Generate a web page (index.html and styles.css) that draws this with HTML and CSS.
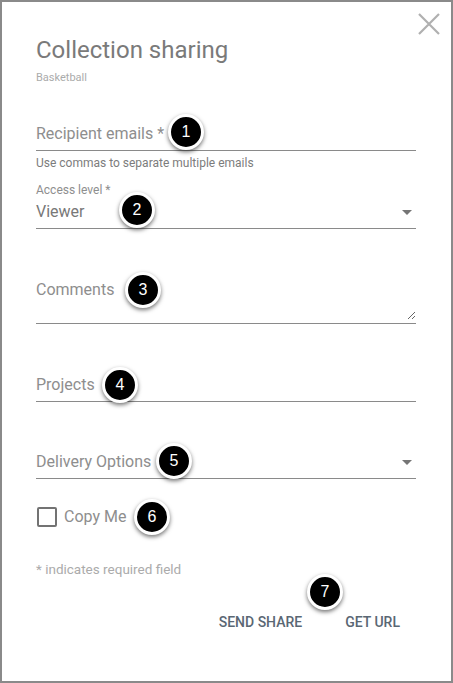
FILE: index.html
```html
<!DOCTYPE html>
<html lang="en">
<head>
    <meta charset="UTF-8">
    <meta name="viewport" content="width=device-width, initial-scale=1.0">
    <title>Collection sharing</title>
    <link rel="stylesheet" href="styles.css">
</head>
<body>
    <div class="dialog">
        <button class="close" aria-label="Close">
            <svg width="22" height="22" viewBox="0 0 22 22">
                <path d="M1 1 L21 21 M21 1 L1 21" stroke="#b0b0b0" stroke-width="2.2" fill="none"/>
            </svg>
        </button>

        <h1 class="title">Collection sharing</h1>
        <p class="subtitle">Basketball</p>

        <div class="field field-emails">
            <span class="placeholder">Recipient emails *</span>
        </div>
        <p class="helper">Use commas to separate multiple emails</p>

        <div class="field field-select field-access">
            <span class="small-label">Access level *</span>
            <div class="select-row">
                <span class="value">Viewer</span>
                <span class="arrow"></span>
            </div>
        </div>

        <div class="field field-comments">
            <span class="placeholder">Comments</span>
            <svg class="grip" width="9" height="9" viewBox="0 0 9 9">
                <path d="M1 8 L8 1 M5 8 L8 5" stroke="#666" stroke-width="1" fill="none"/>
            </svg>
        </div>

        <div class="field field-projects">
            <span class="placeholder">Projects</span>
        </div>

        <div class="field field-select field-delivery">
            <div class="select-row">
                <span class="placeholder">Delivery Options</span>
                <span class="arrow"></span>
            </div>
        </div>

        <label class="checkbox-row">
            <span class="checkbox"></span>
            <span class="checkbox-text">Copy Me</span>
        </label>

        <p class="required-note">* indicates required field</p>

        <div class="actions">
            <button class="btn">SEND SHARE</button>
            <button class="btn">GET URL</button>
        </div>

        <!-- numbered callouts -->
        <span class="badge badge-1">1</span>
        <span class="badge badge-2">2</span>
        <span class="badge badge-3">3</span>
        <span class="badge badge-4">4</span>
        <span class="badge badge-5">5</span>
        <span class="badge badge-6">6</span>
        <span class="badge badge-7">7</span>
    </div>
</body>
</html>
```

FILE: styles.css
```css
* {
    margin: 0;
    padding: 0;
    box-sizing: border-box;
}

body {
    background: #fff;
    font-family: Roboto, 'Liberation Sans', sans-serif;
}

.dialog {
    position: relative;
    width: 453px;
    height: 683px;
    border: 2px solid #8a8a8a;
    padding: 34px 35px 0 34px;
    background: #fff;
}

.close {
    position: absolute;
    top: 11px;
    right: 11px;
    width: 22px;
    height: 22px;
    border: none;
    background: none;
    display: flex;
}

.title {
    font-size: 24px;
    line-height: 28px;
    font-weight: 400;
    color: #7a7a7a;
}

.subtitle {
    margin-top: 7px;
    font-size: 11px;
    line-height: 14px;
    color: #ababab;
}

.field {
    border-bottom: 1px solid #8a8a8a;
    padding-bottom: 6px;
}

.placeholder {
    display: block;
    font-size: 16px;
    line-height: 20px;
    color: #8e8e8e;
}

.field-emails {
    margin-top: 39px;
}

.helper {
    margin-top: 4px;
    font-size: 12px;
    line-height: 16px;
    color: #7c7c7c;
}

.field-access {
    margin-top: 11px;
}

.small-label {
    display: block;
    font-size: 12px;
    line-height: 16px;
    color: #8e8e8e;
}

.select-row {
    display: flex;
    align-items: center;
    justify-content: space-between;
}

.field-access .select-row {
    margin-top: 4px;
}

.value {
    font-size: 16px;
    line-height: 20px;
    color: #787878;
}

.arrow {
    width: 0;
    height: 0;
    margin-right: 4px;
    border-left: 5px solid transparent;
    border-right: 5px solid transparent;
    border-top: 5px solid #757575;
}

.field-comments {
    position: relative;
    margin-top: 51px;
    height: 44px;
    padding-bottom: 0;
}

.grip {
    position: absolute;
    right: 0;
    bottom: 3px;
}

.field-projects {
    margin-top: 51px;
}

.field-delivery {
    margin-top: 50px;
}

.checkbox-row {
    margin-top: 28px;
    display: flex;
    align-items: center;
    height: 20px;
}

.checkbox {
    width: 20px;
    height: 20px;
    border: 2px solid #737373;
    border-radius: 2px;
    margin-left: 1px;
}

.checkbox-text {
    margin-left: 7px;
    font-size: 16px;
    line-height: 20px;
    color: #8e8e8e;
}

.required-note {
    margin-top: 34px;
    font-size: 13.5px;
    line-height: 16px;
    color: #ababab;
}

.actions {
    margin-top: 35px;
    display: flex;
    justify-content: flex-end;
    gap: 11px;
}

.btn {
    border: none;
    background: none;
    padding: 0 16px;
    font-family: Roboto, 'Liberation Sans', sans-serif;
    font-size: 14px;
    line-height: 20px;
    font-weight: 500;
    color: #5a6773;
}

.badge {
    position: absolute;
    width: 36px;
    height: 36px;
    border-radius: 50%;
    background: #000;
    border: 3px solid #fff;
    box-shadow: 0 2px 4px rgba(0, 0, 0, 0.55);
    color: #fff;
    font-family: 'Liberation Sans', Arial, sans-serif;
    font-size: 16px;
    display: flex;
    align-items: center;
    justify-content: center;
}

.badge-1 { left: 166px; top: 112px; }
.badge-2 { left: 117px; top: 190px; }
.badge-3 { left: 123px; top: 270px; }
.badge-4 { left: 100px; top: 365px; }
.badge-5 { left: 154px; top: 441px; }
.badge-6 { left: 132px; top: 497px; }
.badge-7 { left: 305px; top: 572px; }
```
